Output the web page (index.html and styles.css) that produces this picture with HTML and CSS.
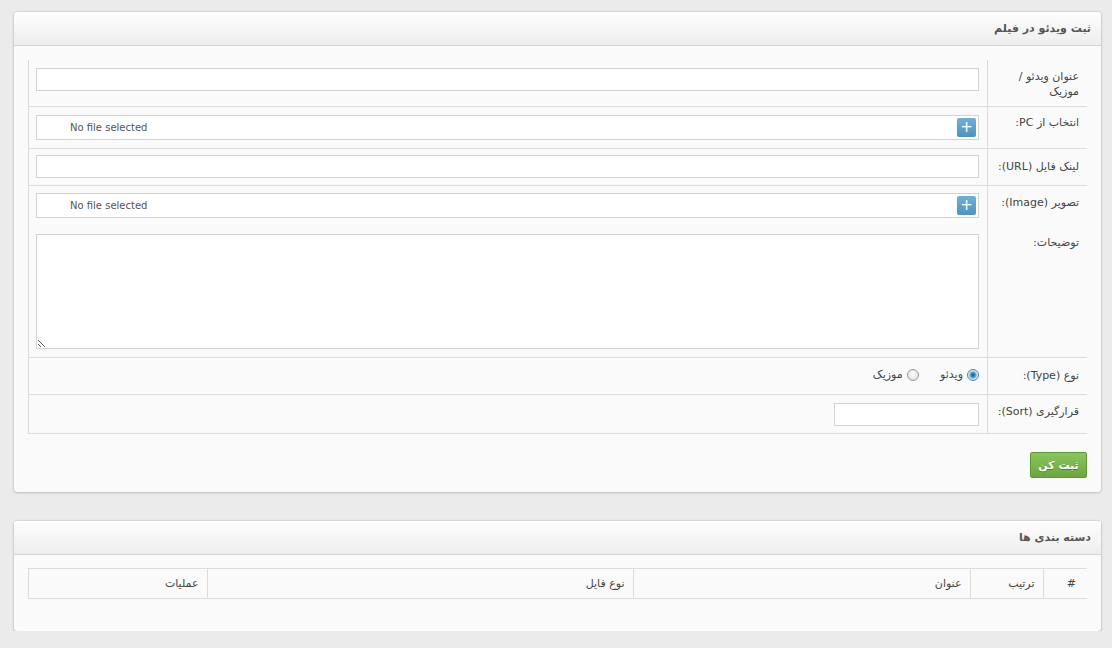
FILE: index.html
```html
<!DOCTYPE html>
<html lang="fa" dir="rtl">
<head>
    <meta charset="UTF-8">
    <title>ثبت ویدئو در فیلم</title>
    <link rel="stylesheet" href="styles.css">
</head>
<body>

<!-- فرم ثبت -->
<div class="box">
    <div class="box-head">ثبت ویدئو در فیلم</div>
    <div class="box-body">
        <table class="form-table">
            <tr class="r1">
                <th>عنوان ویدئو / موزیک</th>
                <td><input type="text" class="field"></td>
            </tr>
            <tr class="r2">
                <th>انتخاب از PC:</th>
                <td>
                    <div class="file">
                        <span class="file-name">No file selected</span>
                        <span class="file-btn">+</span>
                    </div>
                </td>
            </tr>
            <tr class="r3">
                <th>لینک فایل (URL):</th>
                <td><input type="text" class="field"></td>
            </tr>
            <tr class="r4 nob">
                <th>تصویر (Image):</th>
                <td>
                    <div class="file">
                        <span class="file-name">No file selected</span>
                        <span class="file-btn">+</span>
                    </div>
                </td>
            </tr>
            <tr class="r5">
                <th>توضیحات:</th>
                <td><textarea class="area"></textarea></td>
            </tr>
            <tr class="r6">
                <th>نوع (Type):</th>
                <td>
                    <label class="radio"><span class="dot on"></span>ویدئو</label>
                    <label class="radio"><span class="dot"></span>موزیک</label>
                </td>
            </tr>
            <tr class="r7">
                <th>قرارگیری (Sort):</th>
                <td><input type="text" class="field short"></td>
            </tr>
        </table>
        <div class="actions">
            <button class="btn-green">ثبت کن</button>
        </div>
    </div>
</div>

<!-- لیست -->
<div class="box second">
    <div class="box-head">دسته بندی ها</div>
    <div class="box-body list-body">
        <table class="list-table">
            <tr>
                <td class="c-id">#</td>
                <td class="c-sort">ترتیب</td>
                <td class="c-title">عنوان</td>
                <td class="c-type">نوع فایل</td>
                <td>عملیات</td>
            </tr>
        </table>
    </div>
</div>

</body>
</html>
```

FILE: styles.css
```css
body {
    margin: 0;
    padding: 12px 11px 0 14px;
    background: #ebebeb;
    color: #444;
    font-family: Tahoma, "DejaVu Sans", sans-serif;
    font-size: 11px;
    direction: rtl;
}

.box {
    background: #fafafa;
    border-radius: 3px;
    box-shadow: 0 0 2px rgba(0, 0, 0, 0.25), 0 1px 3px rgba(0, 0, 0, 0.12);
}

.box.second {
    margin-top: 29px;
}

.box-head {
    height: 33px;
    line-height: 33px;
    padding-right: 10px;
    font-weight: bold;
    font-size: 11px;
    color: #555;
    background: linear-gradient(#fdfdfd, #eeeeee);
    border-bottom: 1px solid #d4d4d4;
    border-radius: 3px 3px 0 0;
}

.box-body {
    padding: 14px;
}

/* جدول فرم */
.form-table {
    width: 100%;
    border-collapse: collapse;
}

.form-table tr {
    border-bottom: 1px solid #dcdcdc;
}

.form-table tr.nob {
    border-bottom: none;
}

.form-table th {
    width: 84px;
    padding: 7px 8px 8px 7px;
    text-align: right;
    vertical-align: top;
    font-weight: normal;
    line-height: 15px;
    color: #444;
    border-left: 1px solid #dcdcdc;
}

.form-table td {
    padding: 8px 8px 8px 7px;
    vertical-align: top;
    border-left: 1px solid #dcdcdc;
}

.r1 th { padding-top: 9px; padding-bottom: 7px; }
.r1 td { padding-top: 8px; padding-bottom: 13px; }
.r2 th { padding-top: 8px; }
.r3 td { padding-top: 6px; padding-bottom: 7px; }
.r3 th { padding-top: 10px; }
.r4 th { padding-top: 9px; }
.r4 td { padding-top: 7px; padding-bottom: 8px; }
.r5 th { padding-top: 9px; }
.r5 td { padding-top: 8px; }
.r6 th { padding-top: 10px; padding-bottom: 11px; }
.r6 td { padding-top: 10px; }
.r7 th { padding-top: 9px; }
.r7 td { padding-top: 8px; padding-bottom: 7px; }

.field {
    display: block;
    width: 100%;
    height: 23px;
    box-sizing: border-box;
    border: 1px solid #d2d2d2;
    background: #fff;
    margin: 0;
}

.field.short {
    width: 145px;
}

.file {
    height: 25px;
    box-sizing: border-box;
    border: 1px solid #d2d2d2;
    background: #fff;
    display: flex;
    align-items: center;
    justify-content: space-between;
    padding: 0 2px 0 33px;
    direction: ltr;
}

.file-name {
    font-size: 10px;
    color: #555;
}

.file-btn {
    width: 19px;
    height: 19px;
    line-height: 19px;
    text-align: center;
    color: #fff;
    font-size: 15px;
    border-radius: 2px;
    background: linear-gradient(#6fb0d8, #4d93c2);
}

.area {
    display: block;
    width: 100%;
    height: 115px;
    box-sizing: border-box;
    border: 1px solid #d2d2d2;
    background: #fff;
    margin: 0;
    resize: both;
}

.radio {
    display: inline-flex;
    align-items: center;
    margin-left: 18px;
    color: #444;
}

.dot {
    width: 10px;
    height: 10px;
    border: 1px solid #9a9a9a;
    border-radius: 50%;
    margin-left: 4px;
    background: radial-gradient(circle at 50% 40%, #ffffff, #d7d7d7);
}

.dot.on {
    border-color: #5a7f9c;
    background: radial-gradient(circle, #1f5c8a 0, #2a8ad0 2px, #bcd8ec 4px, #e8f0f6 5px);
}

.actions {
    padding-top: 18px;
    text-align: right;
}

.btn-green {
    width: 57px;
    height: 26px;
    border: 1px solid #5c9b33;
    border-radius: 2px;
    background: linear-gradient(#8bc55d, #6aa63e);
    color: #fff;
    font-family: Tahoma, "DejaVu Sans", sans-serif;
    font-size: 11px;
    font-weight: bold;
    text-shadow: 0 1px 0 rgba(0, 0, 0, 0.3);
    vertical-align: top;
}

/* جدول لیست */
.list-body {
    padding-top: 13px;
    padding-bottom: 32px;
}

.list-table {
    width: 100%;
    table-layout: fixed;
    border-collapse: collapse;
    border-top: 1px solid #dcdcdc;
    border-bottom: 1px solid #dcdcdc;
}

.list-table td {
    box-sizing: border-box;
    height: 30px;
    padding: 0 8px;
    text-align: right;
    border-left: 1px solid #dcdcdc;
    color: #444;
}

.list-table .c-id { width: 44px; padding-right: 11px; }
.list-table .c-sort { width: 73px; }
.list-table .c-title { width: 337px; }
.list-table .c-type { width: 426px; }
```
